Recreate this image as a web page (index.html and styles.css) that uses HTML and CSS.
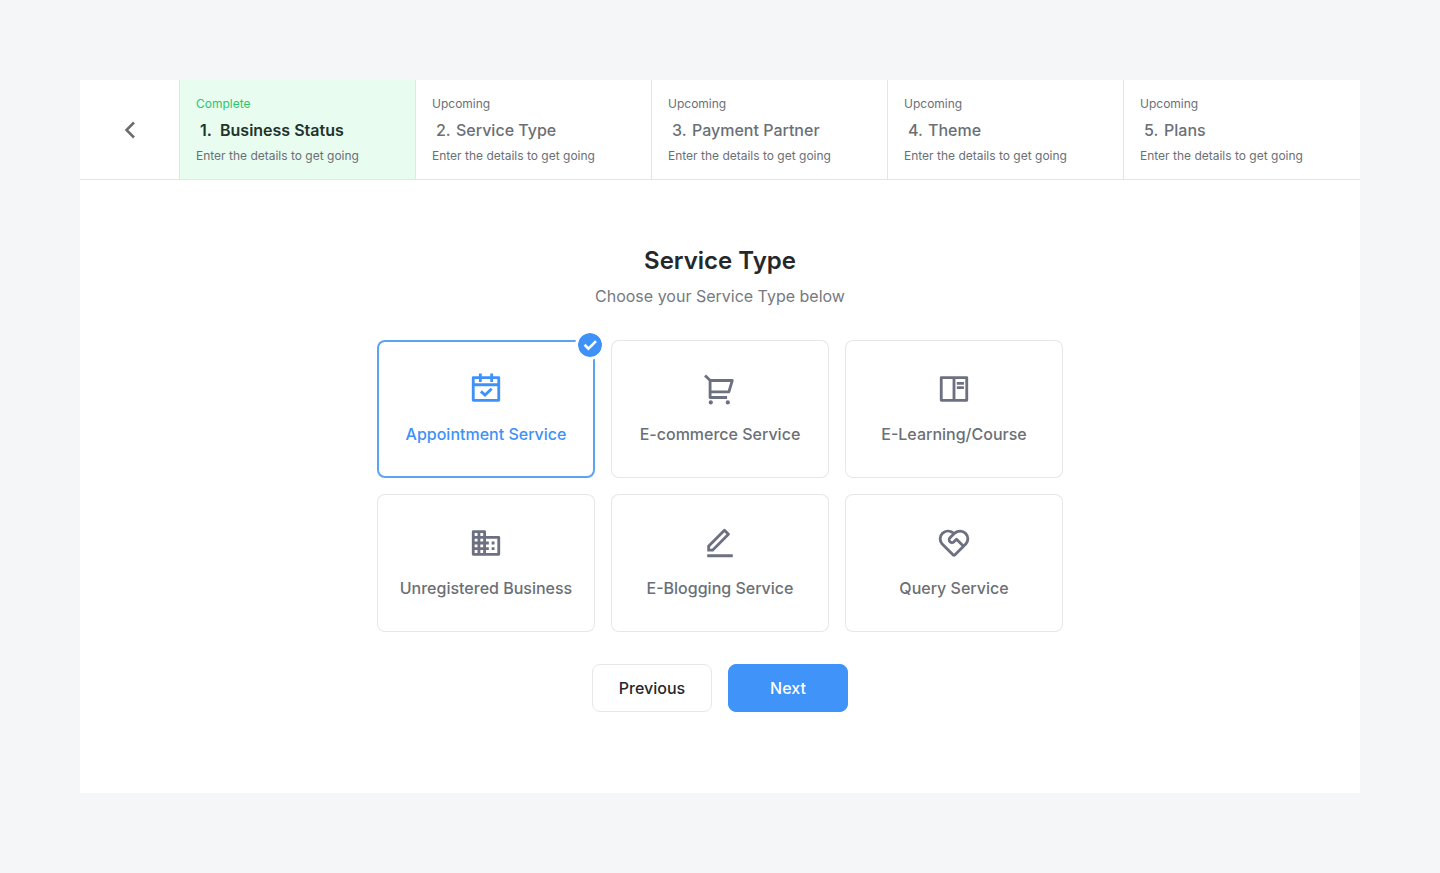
FILE: index.html
```
<!DOCTYPE html>
<html lang="en">
<head>
    <meta charset="UTF-8">
    <meta name="viewport" content="width=device-width, initial-scale=1.0">
    <title>Service Type</title>
    <link rel="stylesheet" href="styles.css">
</head>
<body>
    <div class="panel">
        <header class="steps">
            <button class="back" type="button" aria-label="Back">
                <svg width="24" height="24" viewBox="0 0 24 24"><path d="M16 4.5L8.5 12l7.500 7.500" fill="none" stroke="currentColor" stroke-width="2.500"/></svg>
            </button>
            <ol class="step-list">
                <li class="step complete">
                    <span class="step-state">Complete</span>
                    <h2 class="step-title"><span class="step-number">1.</span>Business Status</h2>
                    <p class="step-text">Enter the details to get going</p>
                </li>
                <li class="step">
                    <span class="step-state">Upcoming</span>
                    <h2 class="step-title"><span class="step-number">2.</span>Service Type</h2>
                    <p class="step-text">Enter the details to get going</p>
                </li>
                <li class="step">
                    <span class="step-state">Upcoming</span>
                    <h2 class="step-title"><span class="step-number">3.</span>Payment Partner</h2>
                    <p class="step-text">Enter the details to get going</p>
                </li>
                <li class="step">
                    <span class="step-state">Upcoming</span>
                    <h2 class="step-title"><span class="step-number">4.</span>Theme</h2>
                    <p class="step-text">Enter the details to get going</p>
                </li>
                <li class="step">
                    <span class="step-state">Upcoming</span>
                    <h2 class="step-title"><span class="step-number">5.</span>Plans</h2>
                    <p class="step-text">Enter the details to get going</p>
                </li>
            </ol>
        </header>

        <form class="content">
            <h1>Service Type</h1>
            <p class="subtitle">Choose your Service Type below</p>

            <div class="cards">
                <label class="card">
                    <input type="radio" name="service" value="appointment" checked>
                    <svg class="icon" viewBox="0 0 24 24">
                        <path d="M17 3h4a1 1 0 0 1 1 1v16a1 1 0 0 1-1 1H3a1 1 0 0 1-1-1V4a1 1 0 0 1 1-1h4V1h2v2h6V1h2v2zm-2 2H9v2H7V5H4v3h16V5h-3v2h-2V5zm5 5H4v9h16v-9z"/>
                        <path d="M8.400 13.700l2.900 2.600 4.700-4.500" fill="none" stroke="currentColor" stroke-width="2"/>
                    </svg>
                    <span>Appointment Service</span>
                    <svg class="badge" viewBox="0 0 24 24">
                        <circle cx="12" cy="12" r="12"/>
                        <path d="M6.500 11.800l4 3.900 7.500-7.500" fill="none" stroke="#fff" stroke-width="2.600"/>
                    </svg>
                </label>
                <label class="card">
                    <input type="radio" name="service" value="ecommerce">
                    <svg class="icon" viewBox="0 0 24 24">
                        <path d="M4 6.414L.757 3.172l1.415-1.415L5.414 5h15.242a1 1 0 0 1 .958 1.287l-2.4 8a1 1 0 0 1-.958.713H6v2h11v2H5a1 1 0 0 1-1-1V6.414zM6 7v6h11.512l1.8-6H6zm-.5 16a1.5 1.5 0 1 1 0-3 1.5 1.5 0 0 1 0 3zm12 0a1.5 1.5 0 1 1 0-3 1.5 1.5 0 0 1 0 3z"/>
                    </svg>
                    <span>E-commerce Service</span>
                </label>
                <label class="card">
                    <input type="radio" name="service" value="elearning">
                    <svg class="icon" viewBox="0 0 24 24">
                        <path d="M2 3.993A1 1 0 0 1 2.992 3h18.016c.548 0 .992.445.992.993v16.014a1 1 0 0 1-.992.993H2.992A.993.993 0 0 1 2 20.007V3.993zM11 5H4v14h7V5zm2 0v14h7V5h-7zm1 2h5v2h-5V7zm0 3h5v2h-5v-2z"/>
                    </svg>
                    <span>E-Learning/Course</span>
                </label>
                <label class="card">
                    <input type="radio" name="service" value="unregistered">
                    <svg class="icon" viewBox="0 0 24 24">
                        <path d="M18 15h-2v2h2zm0-4h-2v2h2zm2 8h-8v-2h2v-2h-2v-2h2v-2h-2V9h8zM10 7H8V5h2zm0 4H8V9h2zm0 4H8v-2h2zm0 4H8v-2h2zM6 7H4V5h2zm0 4H4V9h2zm0 4H4v-2h2zm0 4H4v-2h2zm6-12V4a1 1 0 0 0-1-1H3a1 1 0 0 0-1 1v16a1 1 0 0 0 1 1h18a1 1 0 0 0 1-1V8a1 1 0 0 0-1-1z"/>
                    </svg>
                    <span>Unregistered Business</span>
                </label>
                <label class="card">
                    <input type="radio" name="service" value="blogging">
                    <svg class="icon" viewBox="0 0 24 24">
                        <path d="M6.414 16L16.556 5.858l-1.414-1.414L5 14.586V16h1.414zm.829 2H3v-4.243L14.435 2.322a1 1 0 0 1 1.414 0l2.829 2.829a1 1 0 0 1 0 1.414L7.243 18zM3 20h18v2H3v-2z"/>
                    </svg>
                    <span>E-Blogging Service</span>
                </label>
                <label class="card">
                    <input type="radio" name="service" value="query">
                    <svg class="icon" viewBox="0 0 24 24">
                        <path d="M3.161 4.469a6.5 6.5 0 0 1 8.84-.328 6.5 6.5 0 0 1 9.178 9.154l-7.765 7.79a2 2 0 0 1-2.719.102l-.11-.101-7.764-7.791a6.5 6.5 0 0 1 .34-8.826zm1.414 1.414a4.5 4.5 0 0 0-.146 6.21l.146.154L12 19.672l5.303-5.304-3.535-3.535-1.06 1.06a3 3 0 1 1-4.244-4.242l2.102-2.103a4.501 4.501 0 0 0-5.837.189l-.154.146zm8.486 2.828a1 1 0 0 1 1.414 0l4.242 4.242.708-.706a4.5 4.5 0 0 0-6.211-6.51l-.153.146-3.182 3.182a1 1 0 0 0-.078 1.327l.078.087a1 1 0 0 0 1.327.078l.087-.078 1.768-1.768z"/>
                    </svg>
                    <span>Query Service</span>
                </label>
            </div>

            <div class="actions">
                <button class="btn" type="button">Previous</button>
                <button class="btn btn-primary" type="submit">Next</button>
            </div>
        </form>
    </div>
</body>
</html>
```
FILE: styles.css
```
* {
    box-sizing: border-box;
}
body {
    margin: 0;
    min-height: 100vh;
    padding: 80px;
    display: flex;
    font-family: Inter, "Liberation Sans", sans-serif;
    color: #6b6f76;
    background-color: #f5f6f8;
}
h1, h2, p, ol {
    margin: 0;
    padding: 0;
}
.panel {
    flex: 1;
    background-color: #fff;
}

/* steps */
.steps {
    display: flex;
    border-bottom: 1px solid #e4e5e7;
}
.back {
    width: 100px;
    display: flex;
    justify-content: center;
    align-items: center;
    padding: 0;
    border: none;
    border-right: 1px solid #e4e5e7;
    background: none;
    color: #6b6b70;
    cursor: pointer;
}
.step-list {
    flex: 1;
    display: grid;
    grid-template-columns: repeat(5, 1fr);
    list-style: none;
}
.step {
    padding: 16px 16px 15px;
    border-right: 1px solid #e4e5e7;
    font-size: 12px;
    line-height: 16px;
}
.step:last-child {
    border-right: none;
}
.step-state {
    display: block;
}
.step-title {
    display: flex;
    margin: 6px 0;
    padding-left: 4px;
    font-size: 16px;
    font-weight: 500;
    line-height: 24px;
}
.step-number {
    width: 20px;
}
.complete {
    background-color: #e8fdf0;
}
.complete .step-state {
    color: #2cc56f;
}
.complete .step-title {
    color: #22332b;
    font-weight: 600;
}

/* service type form */
.content {
    display: flex;
    flex-direction: column;
    align-items: center;
    padding: 64px 16px;
}
h1 {
    font-size: 24px;
    font-weight: 600;
    line-height: 34px;
    color: #25282b;
}
.subtitle {
    margin-top: 6px;
    font-size: 16px;
    line-height: 24px;
    color: #76797f;
}
.cards {
    width: 100%;
    max-width: 686px;
    margin: 32px 0;
    display: grid;
    grid-template-columns: repeat(3, 1fr);
    gap: 16px;
}
.card {
    position: relative;
    height: 138px;
    display: flex;
    flex-direction: column;
    align-items: center;
    justify-content: center;
    gap: 16px;
    border-radius: 8px;
    box-shadow: inset 0 0 0 1px #e6e7e9;
    font-size: 16px;
    font-weight: 500;
    line-height: 24px;
    cursor: pointer;
}
.card input {
    position: absolute;
    opacity: 0;
}
.card:has(input:checked) {
    color: #3e92f7;
    box-shadow: inset 0 0 0 2px #5ba3f7;
}
.icon {
    width: 34px;
    height: 34px;
    fill: #6d7080;
}
.card:has(input:checked) .icon {
    fill: currentColor;
}
.badge {
    position: absolute;
    top: -10px;
    right: -10px;
    width: 30px;
    height: 30px;
    border: 3px solid #fff;
    border-radius: 50%;
    background-color: #fff;
    fill: #3e92f7;
}
.actions {
    display: flex;
    gap: 16px;
}
.btn {
    width: 120px;
    height: 48px;
    border: 1px solid #e6e7e9;
    border-radius: 8px;
    background-color: #fff;
    color: #25282b;
    font-family: inherit;
    font-size: 16px;
    font-weight: 500;
    cursor: pointer;
}
.btn-primary {
    border-color: #3f93f9;
    background-color: #3f93f9;
    color: #fff;
}
```
